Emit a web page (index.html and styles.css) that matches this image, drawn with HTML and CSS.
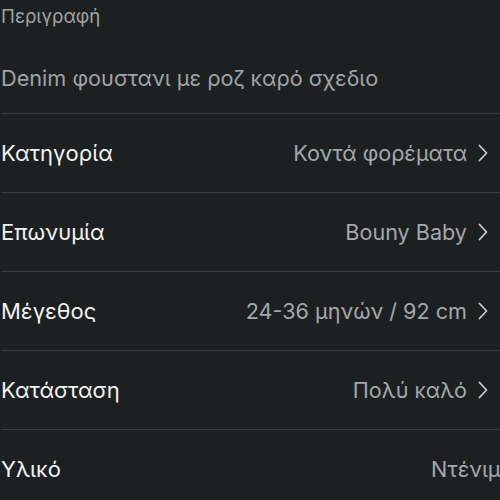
FILE: index.html
```html
<!DOCTYPE html>
<html lang="el">
<head>
    <meta charset="UTF-8">
    <meta name="viewport" content="width=device-width, initial-scale=1.0">
    <title>Λεπτομέρειες</title>
    <link rel="stylesheet" href="styles.css">
</head>
<body>
    <div class="details">
        <div class="description">
            <div class="section-title">Περιγραφή</div>
            <p class="description-text">Denim φουστανι με ροζ καρό σχεδιο</p>
        </div>

        <div class="row">
            <span class="label">Κατηγορία</span>
            <span class="value">Κοντά φορέματα</span>
            <svg class="chevron" viewBox="0 0 10 18"><path d="M1.5 1.5 L8.5 9 L1.5 16.5"/></svg>
        </div>
        <div class="row">
            <span class="label">Επωνυμία</span>
            <span class="value">Bouny Baby</span>
            <svg class="chevron" viewBox="0 0 10 18"><path d="M1.5 1.5 L8.5 9 L1.5 16.5"/></svg>
        </div>
        <div class="row">
            <span class="label">Μέγεθος</span>
            <span class="value">24-36 μηνών / 92 cm</span>
            <svg class="chevron" viewBox="0 0 10 18"><path d="M1.5 1.5 L8.5 9 L1.5 16.5"/></svg>
        </div>
        <div class="row">
            <span class="label">Κατάσταση</span>
            <span class="value">Πολύ καλό</span>
            <svg class="chevron" viewBox="0 0 10 18"><path d="M1.5 1.5 L8.5 9 L1.5 16.5"/></svg>
        </div>
        <div class="row row-plain">
            <span class="label">Υλικό</span>
            <span class="value">Ντένιμ</span>
        </div>
    </div>
</body>
</html>
```

FILE: styles.css
```css
html, body {
    margin: 0;
    padding: 0;
    background-color: #1c2021;
    overflow: hidden;
}
body {
    font-family: Inter, "Noto Sans", sans-serif;
    color: #f2f3f3;
}
.details {
    padding-left: 1px;
}
.description {
    height: 113px;
    border-bottom: 1.5px solid #3a3f41;
}
.section-title {
    padding-top: 5px;
    font-size: 18.7px;
    line-height: 24px;
    color: #9ea4a6;
}
.description-text {
    margin: 36px 0 0;
    font-size: 21.7px;
    line-height: 26px;
    color: #9ea4a6;
}
.row {
    display: flex;
    align-items: center;
    height: 78px;
    padding-right: 12px;
    border-bottom: 1.5px solid #3a3f41;
}
.label {
    flex: 1;
    font-size: 22px;
}
.value {
    font-size: 21.6px;
    color: #a3a9ab;
}
.chevron {
    width: 10px;
    height: 18px;
    margin-left: 11px;
    fill: none;
    stroke: #c9cdce;
    stroke-width: 1.8;
    stroke-linecap: round;
    stroke-linejoin: round;
}
.row-plain {
    border-bottom: none;
    padding-right: 0;
}
.row-plain .value {
    flex: none;
    width: 69px;
    overflow: hidden;
    white-space: nowrap;
}
```
